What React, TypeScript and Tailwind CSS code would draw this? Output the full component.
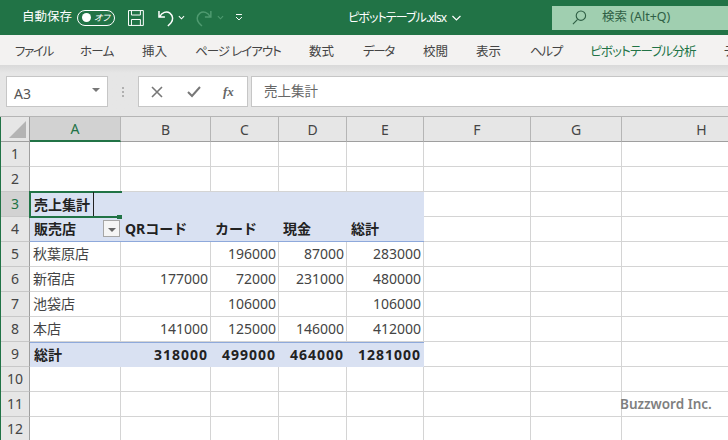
const font = "[font-family:'Noto_Sans','Noto_Sans_CJK_JP',sans-serif]";

const tabs = [
  { name: "ファイル", className: "w-[37px] tracking-[-1.3px]" },
  { name: "ホーム", className: "w-[34px] tracking-[-0.7px]" },
  { name: "挿入", className: "w-[25px]" },
  { name: "ページ レイアウト", className: "w-[86px] tracking-[-1px]" },
  { name: "数式", className: "w-[26px]" },
  { name: "データ", className: "w-[32px] tracking-[-1.3px]" },
  { name: "校閲", className: "w-[25px]" },
  { name: "表示", className: "w-[26px]" },
  { name: "ヘルプ", className: "w-[32px] tracking-[-1.3px]" },
];

const columns = ["A", "B", "C", "D", "E", "F", "G", "H"];

const rows: { label: string; values: string[] }[] = [
  { label: "秋葉原店", values: ["", "196000", "87000", "283000"] },
  { label: "新宿店", values: ["177000", "72000", "231000", "480000"] },
  { label: "池袋店", values: ["", "106000", "", "106000"] },
  { label: "本店", values: ["141000", "125000", "146000", "412000"] },
];

const totals = ["318000", "499000", "464000", "1281000"];
const headers = ["QRコード", "カード", "現金", "総計"];

function RowHeader({ n, active }: { n: number; active?: boolean }) {
  return (
    <div
      className={`flex items-center justify-center pb-[2px] border-r border-r-[#9f9f9f] border-b border-b-[#c8c8c8] text-[14px] ${
        active ? "bg-[#d2d2d2] text-[#217346]" : "bg-[#e6e6e6] text-[#444444]"
      }`}
    >
      {n}
    </div>
  );
}

function Blank() {
  return <div className="border-r border-b border-[#d4d4d4] bg-white" />;
}

function Blanks({ count }: { count: number }) {
  return (
    <>
      {Array.from({ length: count }).map((_, i) => (
        <Blank key={i} />
      ))}
    </>
  );
}

function Fill({ className = "", children }: { className?: string; children?: React.ReactNode }) {
  return <div className={`bg-[#d9e1f2] flex items-center pb-[1px] whitespace-nowrap ${className}`}>{children}</div>;
}

function Chevron({ className = "" }: { className?: string }) {
  return (
    <svg viewBox="0 0 8 5" className={`w-[7px] h-[5px] ${className}`} fill="none" stroke="currentColor" strokeWidth="1.2">
      <path d="M1 1l3 3 3-3" />
    </svg>
  );
}

function TitleBar() {
  return (
    <div className="h-[35px] bg-[#217346] flex items-center text-white text-[12.5px] [font-feature-settings:'palt']">
      <span className="ml-[22px] w-[48px] whitespace-nowrap">自動保存</span>
      <div className="ml-[7px] w-[38px] h-[16px] rounded-full border border-white flex items-center justify-between pl-[4px] pr-[4px]">
        <span className="w-[9px] h-[9px] rounded-full bg-white" />
        <span className="text-[9px] leading-none italic">オフ</span>
      </div>
      <svg viewBox="0 0 16 16" className="ml-[13px] w-[16px] h-[16px]" fill="none" stroke="white" strokeWidth="1">
        <path d="M.5.5h15v15H.5zM3.5.5v4.5h9V.5M3.5 15.5V9.5h9v6" />
      </svg>
      <svg viewBox="0 0 18 18" className="ml-[13px] w-[18px] h-[18px]" fill="none" stroke="white" strokeWidth="1.5">
        <path d="M2 2v6h6M2.5 8C5 3.500 9.500 1.500 13 4c3.500 2.500 3.500 7.500 1 10l-3 3" />
      </svg>
      <Chevron className="ml-[4px] text-white" />
      <svg viewBox="0 0 18 18" className="ml-[10px] w-[18px] h-[18px]" fill="none" stroke="#4f9a70" strokeWidth="1.5">
        <path d="M16 2v6h-6M15.500 8C13 3.500 8.500 1.500 5 4c-3.500 2.500-3.500 7.500-1 10l3 3" />
      </svg>
      <Chevron className="ml-[4px] text-[#4f9a70]" />
      <svg viewBox="0 0 8 7" className="ml-[11px] w-[8px] h-[7px]" fill="none" stroke="white" strokeWidth="1">
        <path d="M1 .5h6M1 3l3 3 3-3" />
      </svg>
      <span className="ml-[105px] w-[100px] whitespace-nowrap text-[12px] tracking-[-0.9px]">ピボットテーブル.xlsx</span>
      <svg viewBox="0 0 10 6" className="ml-[4px] w-[11px] h-[6px]" fill="none" stroke="white" strokeWidth="1.200">
        <path d="M1 1l4 4 4-4" />
      </svg>
      <div className="ml-[90px] w-[176px] h-[24px] bg-[#a0cfb0] flex items-center text-[#2f5f45] shrink-0">
        <svg viewBox="0 0 16 16" className="ml-[20px] w-[15px] h-[15px]" fill="none" stroke="#2f5f45" strokeWidth="1.200">
          <circle cx="9.500" cy="6" r="5" />
          <path d="M6 10l-5 5" />
        </svg>
        <span className="ml-[15px] whitespace-nowrap">検索 (Alt+Q)</span>
      </div>
    </div>
  );
}

function RibbonTabs() {
  return (
    <div className="h-[30px] bg-[#f3f2f1] flex items-center pl-[15px] pt-[4px] gap-[28px] text-[12.5px] text-[#444444] whitespace-nowrap overflow-hidden [font-feature-settings:'palt']">
      {tabs.map((t) => (
        <span key={t.name} className={`shrink-0 ${t.className}`}>
          {t.name}
        </span>
      ))}
      <span className="shrink-0 w-[106px] tracking-[-0.8px] text-[#217346]">ピボットテーブル分析</span>
      <span className="shrink-0">デザイン</span>
    </div>
  );
}

function FormulaBar() {
  return (
    <div className="h-[52px] bg-[#e6e6e6] bg-gradient-to-b from-[#d9d9d9] to-[#e6e6e6] to-[8px] flex pt-[11px] pb-[9px] pl-[6px] border-b border-[#b5b5b5]">
      <div className="w-[102px] bg-white border border-[#c6c6c6] flex items-center justify-between pl-[7px] pr-[7px] text-[14px] text-[#555555]">
        <span className="mt-[3px]">A3</span>
        <svg viewBox="0 0 8 4" className="w-[8px] h-[4px] mb-[4px]" fill="#777777">
          <path d="M0 0h8L4 4z" />
        </svg>
      </div>
      <div className="w-[30px] flex flex-col items-center justify-center gap-[2px]">
        <span className="w-[2px] h-[2px] bg-[#b0b0b0]" />
        <span className="w-[2px] h-[2px] bg-[#b0b0b0]" />
        <span className="w-[2px] h-[2px] bg-[#b0b0b0]" />
      </div>
      <div className="w-[110px] bg-white border border-[#c6c6c6] flex items-center">
        <svg viewBox="0 0 12 12" className="ml-[12px] w-[12px] h-[12px]" fill="none" stroke="#777777" strokeWidth="1.600">
          <path d="M1 1l10 10M11 1L1 11" />
        </svg>
        <svg viewBox="0 0 14 12" className="ml-[24px] w-[14px] h-[12px]" fill="none" stroke="#777777" strokeWidth="2">
          <path d="M1 6l4 4 8-9" />
        </svg>
        <span className="ml-[22px] text-[13px] italic font-bold text-[#666666] [font-family:'Liberation_Serif',serif]">fx</span>
      </div>
      <div className="flex-1 ml-[3px] bg-white border-y border-l border-[#c6c6c6] flex items-center pl-[12px] text-[13.500px] text-[#666666]">
        売上集計
      </div>
    </div>
  );
}

function Sheet() {
  return (
    <div className="relative grid grid-cols-[29px_91px_90px_68px_68px_77px_107px_91px_160px] grid-rows-[25px_repeat(12,25px)] text-[14px] text-[#444444] overflow-hidden border-l border-l-[#217346]">
      {/* column headers */}
      <div className="bg-[#e6e6e6] border-r border-b border-[#9f9f9f] flex items-end justify-end pr-[3px] pb-[3px]">
        <span className="w-0 h-0 border-l-[17px] border-l-transparent border-b-[17px] border-b-[#b4b4b4]" />
      </div>
      {columns.map((c) => (
        <div
          key={c}
          className={`flex items-center justify-center border-r border-[#b5b5b5] border-b ${
            c === "A"
              ? "bg-[#d2d2d2] text-[#217346] border-b-2 border-b-[#217346]"
              : "bg-[#e6e6e6] text-[#444444] border-b-[#9f9f9f]"
          }`}
        >
          {c}
        </div>
      ))}

      <RowHeader n={1} />
      <Blanks count={8} />
      <RowHeader n={2} />
      <Blanks count={8} />

      <RowHeader n={3} active />
      <Fill className="px-[4px] font-bold text-[#222222]">売上集計</Fill>
      <Fill />
      <Fill />
      <Fill />
      <Fill />
      <Blanks count={3} />

      <RowHeader n={4} />
      <Fill className="pl-[4px] pr-[1px] justify-between font-bold text-[#222222] border-b border-[#8ea9db]">
        <span>販売店</span>
        <span className="w-[17px] h-[17px] bg-[#f5f5f5] border border-[#a6a6a6] flex items-center justify-center">
          <span className="w-0 h-0 border-x-[4px] border-x-transparent border-t-[4px] border-t-[#666666] mt-[2px]" />
        </span>
      </Fill>
      {headers.map((h) => (
        <Fill key={h} className="pl-[4px] font-bold text-[#222222] border-b border-[#8ea9db]">
          {h}
        </Fill>
      ))}
      <Blanks count={3} />

      {rows.map((row, i) => (
        <div key={row.label} className="contents">
          <RowHeader n={5 + i} />
          <div className="border-r border-b border-[#d4d4d4] flex items-center pl-[3px] pb-[1px] whitespace-nowrap">{row.label}</div>
          {row.values.map((v, j) => (
            <div key={j} className="border-r border-b border-[#d4d4d4] flex items-center justify-end pr-[2px] pb-[1px]">
              {v}
            </div>
          ))}
          <Blanks count={3} />
        </div>
      ))}

      <RowHeader n={9} />
      <Fill className="pl-[4px] font-bold text-[#222222] border-t border-[#8ea9db]">総計</Fill>
      {totals.map((v) => (
        <Fill key={v} className="justify-end pr-[3px] font-bold text-[#222222] border-t border-[#8ea9db] tracking-[1px]">
          {v}
        </Fill>
      ))}
      <Blanks count={3} />

      {[10, 11, 12].map((n) => (
        <div key={n} className="contents">
          <RowHeader n={n} />
          <Blanks count={8} />
        </div>
      ))}

      {/* selection around A3, the right side is open while editing */}
      <div className="absolute left-[28px] top-[74px] w-[93px] h-[27px] border-y-2 border-l-2 border-[#217346]">
        <span className="absolute right-0 bottom-[-3px] w-[5px] h-[4px] bg-[#217346]" />
      </div>
      {/* edit caret */}
      <span className="absolute left-[92px] top-[75px] w-px h-[24px] bg-[#222222]" />
      {/* watermark */}
      <span className="absolute left-[619px] top-[277px] text-[13.500px] font-semibold text-[#7f7f7f] whitespace-nowrap">
        Buzzword Inc.
      </span>
    </div>
  );
}

export default function App() {
  return (
    <div className={`w-[728px] h-[440px] overflow-hidden bg-white ${font}`}>
      <TitleBar />
      <RibbonTabs />
      <FormulaBar />
      <Sheet />
    </div>
  );
}
